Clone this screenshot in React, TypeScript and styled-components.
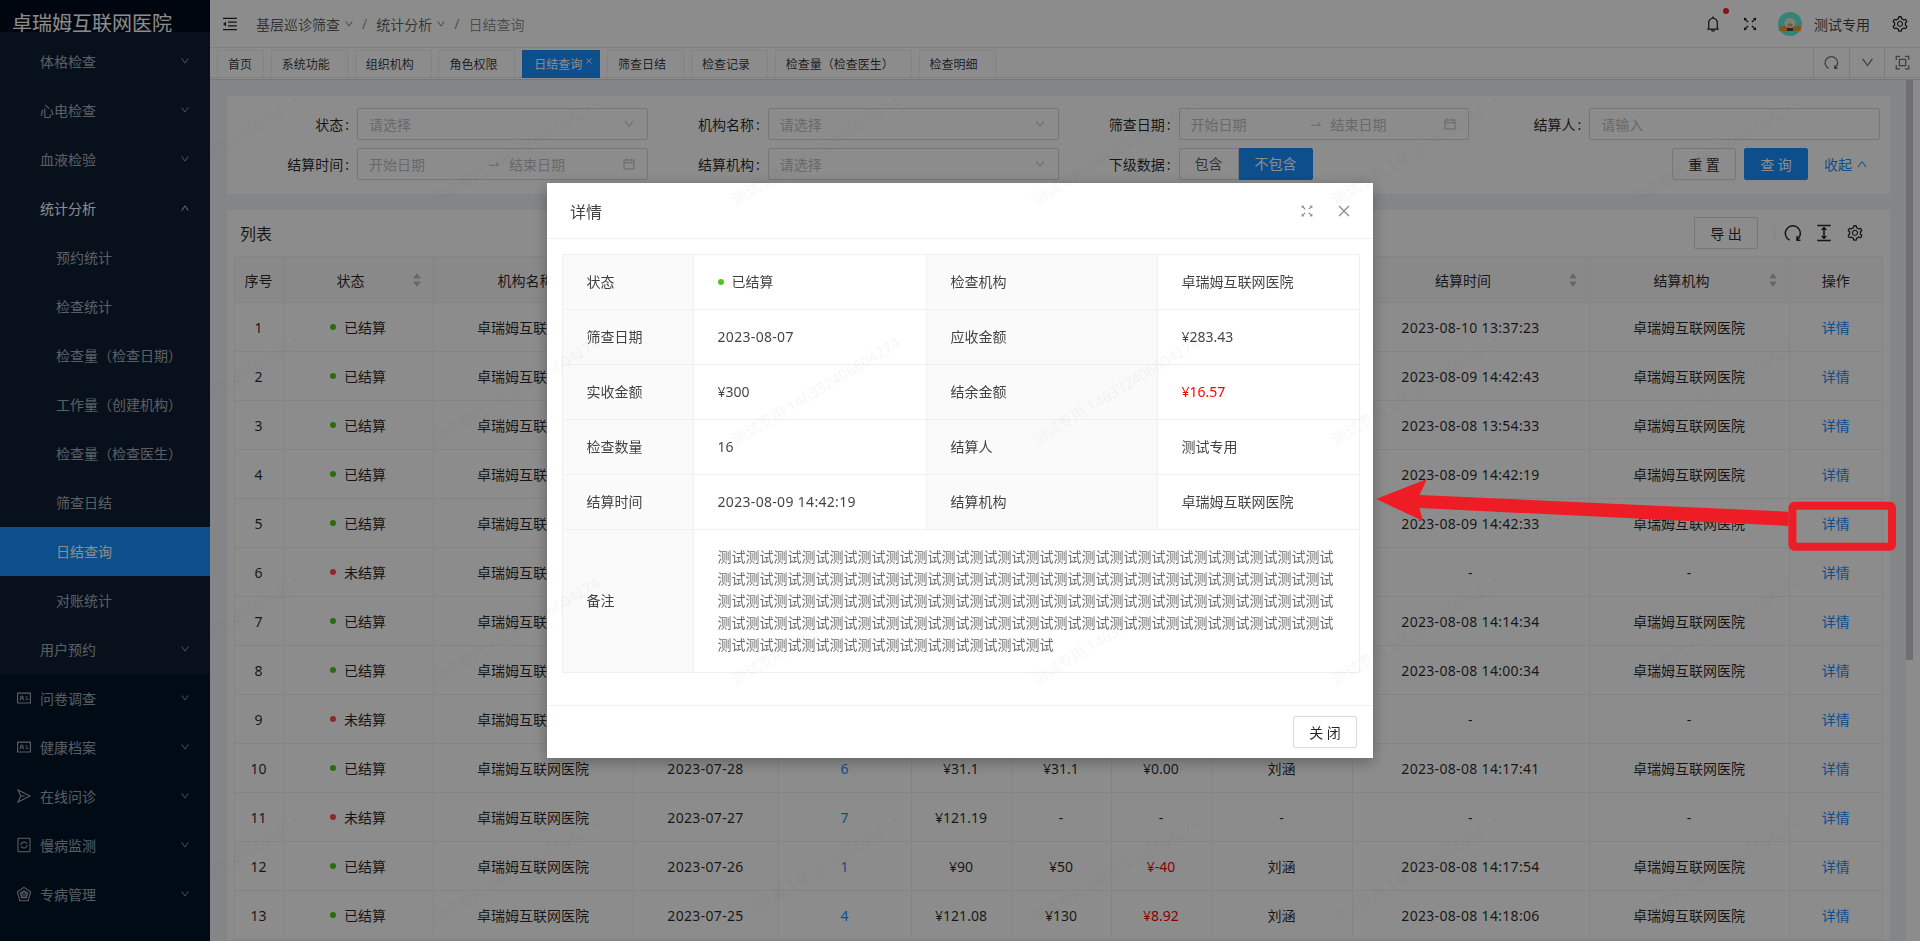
import React from 'react'
import styled, { createGlobalStyle } from 'styled-components'
import {
  AiOutlineBell,
  AiOutlineCalendar,
  AiOutlineClose,
  AiOutlineDown,
  AiOutlineFullscreen,
  AiOutlineIdcard,
  AiOutlineMenuFold,
  AiOutlineSetting,
  AiOutlineSwapRight,
  AiOutlineUp,
} from 'react-icons/ai'

const HOSPITAL = '卓瑞姆互联网医院'

type Row = {
  done: boolean
  date: string
  count: string
  due: string
  paid: string
  rest: string
  restRed?: boolean
  user: string
  time: string
  org: string
}

const rows: Row[] = [
  { done: true, date: '2023-08-09', count: '12', due: '¥210.5', paid: '¥210.5', rest: '¥0.00', user: '测试专用', time: '2023-08-10 13:37:23', org: HOSPITAL },
  { done: true, date: '2023-08-08', count: '9', due: '¥160.2', paid: '¥160.2', rest: '¥0.00', user: '测试专用', time: '2023-08-09 14:42:43', org: HOSPITAL },
  { done: true, date: '2023-08-07', count: '5', due: '¥90', paid: '¥90', rest: '¥0.00', user: '测试专用', time: '2023-08-08 13:54:33', org: HOSPITAL },
  { done: true, date: '2023-08-07', count: '16', due: '¥283.43', paid: '¥300', rest: '¥16.57', restRed: true, user: '测试专用', time: '2023-08-09 14:42:19', org: HOSPITAL },
  { done: true, date: '2023-08-06', count: '8', due: '¥142.1', paid: '¥142.1', rest: '¥0.00', user: '测试专用', time: '2023-08-09 14:42:33', org: HOSPITAL },
  { done: false, date: '2023-08-05', count: '3', due: '¥51.9', paid: '-', rest: '-', user: '-', time: '-', org: '-' },
  { done: true, date: '2023-08-04', count: '6', due: '¥104.6', paid: '¥104.6', rest: '¥0.00', user: '刘涵', time: '2023-08-08 14:14:34', org: HOSPITAL },
  { done: true, date: '2023-08-03', count: '2', due: '¥33.4', paid: '¥33.4', rest: '¥0.00', user: '刘涵', time: '2023-08-08 14:00:34', org: HOSPITAL },
  { done: false, date: '2023-07-31', count: '4', due: '¥70.2', paid: '-', rest: '-', user: '-', time: '-', org: '-' },
  { done: true, date: '2023-07-28', count: '6', due: '¥31.1', paid: '¥31.1', rest: '¥0.00', user: '刘涵', time: '2023-08-08 14:17:41', org: HOSPITAL },
  { done: false, date: '2023-07-27', count: '7', due: '¥121.19', paid: '-', rest: '-', user: '-', time: '-', org: '-' },
  { done: true, date: '2023-07-26', count: '1', due: '¥90', paid: '¥50', rest: '¥-40', restRed: true, user: '刘涵', time: '2023-08-08 14:17:54', org: HOSPITAL },
  { done: true, date: '2023-07-25', count: '4', due: '¥121.08', paid: '¥130', rest: '¥8.92', restRed: true, user: '刘涵', time: '2023-08-08 14:18:06', org: HOSPITAL },
]

const columns = [
  { title: '序号', width: 50 },
  { title: '状态', width: 150, sort: true },
  { title: '机构名称', width: 200, sort: true },
  { title: '筛查日期', width: 145, sort: true },
  { title: '检查数量', width: 133 },
  { title: '应收金额', width: 100 },
  { title: '实收金额', width: 100 },
  { title: '结余金额', width: 100 },
  { title: '结算人', width: 141 },
  { title: '结算时间', width: 237, sort: true },
  { title: '结算机构', width: 200, sort: true },
  { title: '操作', width: 93.5 },
]

const statsMenu = ['预约统计', '检查统计', '检查量（检查日期）', '工作量（创建机构）', '检查量（检查医生）', '筛查日结', '日结查询', '对账统计']
const tabs = ['首页', '系统功能', '组织机构', '角色权限', '日结查询', '筛查日结', '检查记录', '检查量（检查医生）', '检查明细']

const GlobalStyle = createGlobalStyle`
  * { box-sizing: border-box; }
  html, body { margin: 0; height: 100%; overflow: hidden; }
  body {
    font-family: "Noto Sans", "Noto Sans CJK SC", sans-serif;
    font-size: 14px;
    color: rgba(0, 0, 0, 0.85);
  }
`

const Page = styled.div`
  display: flex;
  height: 100vh;
  overflow: hidden;
  background: #f0f2f5;
`

const Sidebar = styled.aside`
  flex: 0 0 210px;
  background: #001529;
  color: rgba(255, 255, 255, 0.65);
  overflow: hidden;
`

const Logo = styled.div`
  height: 32px;
  padding: 11px 0 0 12px;
  font-size: 20px;
  line-height: 26px;
  color: #fff;
  background: #000c1c;
  overflow: hidden;
  white-space: nowrap;
`

const SubMenu = styled.div`
  padding-top: 5px;
  background: #0d1e32;
`

const MenuItem = styled.div<{ $indent?: number; $active?: boolean; $open?: boolean }>`
  display: flex;
  align-items: center;
  height: 49px;
  padding: 0 20px 2px ${p => p.$indent ?? 40}px;
  background: ${p => (p.$active ? '#1890ff' : 'transparent')};
  color: ${p => (p.$active || p.$open ? '#fff' : 'inherit')};
`

const MenuIcon = styled.span`
  display: flex;
  width: 16px;
  margin: 0 8px 0 -1px;
  font-size: 16px;
`

const MenuArrow = styled.span`
  display: flex;
  margin-left: auto;
  font-size: 10px;
`

const Main = styled.div`
  flex: 1;
  min-width: 0;
  display: flex;
  flex-direction: column;
`

const TopBar = styled.header`
  flex: 0 0 48px;
  display: flex;
  align-items: center;
  padding: 0 11px;
  background: #fff;
  border-bottom: 1px solid #e8e8e8;
`

const Trigger = styled.span`
  display: flex;
  font-size: 18px;
  margin-right: 17px;
  color: rgba(0, 0, 0, 0.85);
`

const Crumb = styled.span<{ $last?: boolean }>`
  display: flex;
  align-items: center;
  gap: 4px;
  color: ${p => (p.$last ? 'rgba(0,0,0,.45)' : 'rgba(0,0,0,.65)')};
`

const CrumbSlash = styled.span`
  margin: 0 9px 0 8px;
  color: rgba(0, 0, 0, 0.45);
`

const TopRight = styled.div`
  margin-left: auto;
  display: flex;
  align-items: center;
  gap: 19px;
  font-size: 18px;
  color: rgba(0, 0, 0, 0.85);
`

const TopIcon = styled.span`
  position: relative;
  display: flex;
`

const RedDot = styled.i`
  position: absolute;
  top: -7px;
  right: -7px;
  width: 6px;
  height: 6px;
  border-radius: 50%;
  background: #f5222d;
`

const User = styled.div`
  display: flex;
  align-items: center;
  gap: 12px;
  font-size: 14px;
  margin-right: 2px;
`

const UserName = styled.span`
  color: rgba(0, 0, 0, 0.75);
`

const TabStrip = styled.div`
  flex: 0 0 32px;
  background: #fff;
  border-bottom: 1px solid #d9d9d9;
`

const TabRow = styled.div`
  display: flex;
  height: 30px;
  padding: 2px 0 0 7px;
  border-bottom: 1px solid #e8e8e8;
`

const TabList = styled.div`
  flex: 1;
  display: flex;
  gap: 6.8px;
`

const Tab = styled.div<{ $active?: boolean; $closable?: boolean }>`
  display: flex;
  align-items: center;
  height: 28px;
  padding: 0 ${p => (p.$active ? 7 : p.$closable ? 18 : 12)}px 0 ${p => (p.$active ? 12 : 11)}px;
  font-size: 12px;
  white-space: nowrap;
  color: ${p => (p.$active ? '#fff' : 'rgba(0,0,0,.8)')};
  background: ${p => (p.$active ? '#1890ff' : '#fff')};
  outline: ${p => (p.$active ? 'none' : '1px solid #eee')};
  outline-offset: -1px;
`

const TabClose = styled.span`
  display: flex;
  margin: -6px 0 0 3px;
  font-size: 8px;
`

const TabTools = styled.div`
  display: flex;
  margin-top: -2px;
`

const TabTool = styled.span`
  display: flex;
  align-items: center;
  justify-content: center;
  width: 35.6px;
  font-size: 15px;
  color: rgba(0, 0, 0, 0.55);
  border-left: 1px solid #e0e0e0;
`

const ContentRow = styled.div`
  flex: 1;
  min-height: 0;
  display: flex;
`

const Scroller = styled.main`
  flex: 1;
  min-width: 0;
  padding: 16px 16px 0 17px;
  overflow: hidden;
`

const ScrollTrack = styled.div`
  flex: 0 0 14px;
  background: #fff;
`

const ScrollThumb = styled.div`
  width: 7px;
  height: 580px;
  background: #c9cbcf;
`

const Panel = styled.section`
  background: #fff;
`

const SearchPanel = styled(Panel)`
  display: grid;
  grid-template-columns: repeat(4, 1fr);
  row-gap: 8px;
  padding: 12px 10px 14px;
  margin-bottom: 16px;
`

const Field = styled.div`
  display: flex;
  align-items: center;
  height: 32px;
`

const FieldLabel = styled.label`
  flex: 0 0 120px;
  text-align: right;
  white-space: nowrap;

  &::after {
    content: ':';
    margin: 0 8px 0 2px;
  }
`

const InputBox = styled.div`
  flex: 1;
  min-width: 0;
  height: 32px;
  display: flex;
  align-items: center;
  padding: 0 11px;
  border: 1px solid #d9d9d9;
  border-radius: 2px;
  background: #fff;
  color: #bfbfbf;
`

const Placeholder = styled.span<{ $fixed?: number }>`
  flex: ${p => (p.$fixed ? `0 0 ${p.$fixed}px` : '1')};
`

const RangeArrow = styled.span`
  display: flex;
  font-size: 14px;
  margin-right: 8px;
`

const InputIcon = styled.span`
  display: flex;
  font-size: 14px;
`

const SelectArrow = styled.span`
  display: flex;
  margin-right: 1px;
  font-size: 12px;
`

const Radio = styled.span<{ $on?: boolean }>`
  height: 32px;
  padding: 0 15px;
  line-height: 30px;
  border: 1px solid ${p => (p.$on ? '#1890ff' : '#d9d9d9')};
  border-radius: ${p => (p.$on ? '0 2px 2px 0' : '2px 0 0 2px')};
  background: ${p => (p.$on ? '#1890ff' : '#fff')};
  color: ${p => (p.$on ? '#fff' : 'rgba(0,0,0,.65)')};
`

const Actions = styled(Field)`
  justify-content: flex-end;
  gap: 8px;
  padding-right: 12px;
`

const Button = styled.button<{ $primary?: boolean }>`
  width: 64px;
  height: 32px;
  padding: 0;
  font-family: inherit;
  font-size: 14px;
  border: 1px solid ${p => (p.$primary ? '#1890ff' : '#d9d9d9')};
  border-radius: 2px;
  background: ${p => (p.$primary ? '#1890ff' : '#fff')};
  color: ${p => (p.$primary ? '#fff' : 'rgba(0,0,0,.85)')};
  box-shadow: 0 2px 0 rgba(0, 0, 0, 0.015);
`

const Collapse = styled.span`
  display: flex;
  align-items: center;
  gap: 4px;
  margin-left: 8px;
  color: #1890ff;
  font-size: 14px;
`

const TablePanel = styled(Panel)`
  padding: 0 7px 0 6.5px;
`

const TableBar = styled.div`
  display: flex;
  align-items: center;
  height: 46px;
  padding: 0 19px 0 6.5px;
`

const TableTitle = styled.h3`
  margin: 0;
  font-size: 16px;
  font-weight: 400;
  color: rgba(0, 0, 0, 0.85);
`

const BarRight = styled.div`
  margin-left: auto;
  display: flex;
  align-items: center;
  gap: 13px;
  font-size: 18px;
`

const BarDivider = styled.i`
  width: 1px;
  height: 14px;
  margin: 0 -4px 0 3px;
  background: #eee;
`

const BarIcon = styled.span`
  display: flex;
`

const DataTable = styled.table`
  width: 1649.5px;
  table-layout: fixed;
  border-collapse: separate;
  border-spacing: 0;
  text-align: center;
`

const Col = styled.col<{ $w: number }>`
  width: ${p => p.$w}px;
`

const Th = styled.th`
  height: 47px;
  padding: 0 8px;
  font-weight: 400;
  background: #fafafa;
  border-top: 1px solid #f0f0f0;
  border-bottom: 1px solid #f0f0f0;
  border-right: 1px solid #f0f0f0;

  &:first-child {
    border-left: 1px solid #f0f0f0;
  }
`

const SortHead = styled.div`
  display: flex;
  align-items: center;
`

const SortTitle = styled.span`
  flex: 1;
`

const Sorter = styled.svg`
  flex: 0 0 14px;
  width: 14px;
  height: 16px;
  margin-right: 1px;
  fill: #bfbfbf;
`

const Td = styled.td<{ $tone?: 'link' | 'red' }>`
  height: 49px;
  padding: 0 8px;
  color: ${p => (p.$tone === 'link' ? '#1890ff' : p.$tone === 'red' ? '#ff0000' : 'inherit')};
  border-bottom: 1px solid #f0f0f0;
  border-right: 1px solid #f0f0f0;

  &:first-child {
    border-left: 1px solid #f0f0f0;
  }
`

const Stamp = styled.span`
  letter-spacing: 0.32px;
`

const Badge = styled.span`
  display: inline-flex;
  align-items: center;
  gap: 8px;
  vertical-align: top;
`

const Dot = styled.i<{ $ok: boolean }>`
  width: 6px;
  height: 6px;
  border-radius: 50%;
  background: ${p => (p.$ok ? '#52c41a' : '#ff4d4f')};
`

const Mask = styled.div`
  position: fixed;
  inset: 0;
  background: rgba(0, 0, 0, 0.45);
`

const ModalWrap = styled.div`
  position: fixed;
  inset: 0;
  display: flex;
  justify-content: center;
  align-items: flex-start;
  padding-top: 183px;
`

const Modal = styled.div`
  width: 826px;
  background: #fff;
  box-shadow: 0 4px 14px rgba(0, 0, 0, 0.3);
`

const ModalHead = styled.div`
  display: flex;
  align-items: center;
  height: 56px;
  padding: 0 21px 0 23px;
  border-bottom: 1px solid #f0f0f0;
`

const ModalTitle = styled.span`
  font-size: 16px;
  color: rgba(0, 0, 0, 0.75);
`

const ModalTools = styled.div`
  margin-left: auto;
  display: flex;
  align-items: center;
  gap: 21px;
  color: rgba(0, 0, 0, 0.45);
  font-size: 16px;
`

const ModalBody = styled.div`
  padding: 15px 14.5px 32px;
`

const DescTable = styled.table`
  width: 797px;
  table-layout: fixed;
  border-collapse: collapse;
`

const DescLabel = styled.th`
  padding: 16px 24px;
  font-weight: 400;
  text-align: left;
  line-height: 22px;
  color: rgba(0, 0, 0, 0.75);
  background: #fafafa;
  border: 1px solid #f0f0f0;
`

const DescValue = styled.td<{ $red?: boolean }>`
  padding: 16px 24px;
  line-height: 22px;
  color: ${p => (p.$red ? '#ff0000' : 'rgba(0,0,0,.75)')};
  border: 1px solid #f0f0f0;
`

const RemarkText = styled(DescValue)`
  color: rgba(0, 0, 0, 0.6);
`

const ModalFoot = styled.div`
  display: flex;
  justify-content: flex-end;
  padding: 10px 16px;
  border-top: 1px solid #f0f0f0;
`

const WatermarkLayer = styled.div`
  position: fixed;
  top: 0;
  right: 0;
  bottom: 0;
  left: 210px;
  overflow: hidden;
  pointer-events: none;
`

const WatermarkGrid = styled.div`
  position: absolute;
  left: -377px;
  top: -30px;
  display: grid;
  grid-template-columns: repeat(7, 300px);
  grid-auto-rows: 240px;
`

const Watermark = styled.span`
  align-self: end;
  font-size: 15px;
  line-height: 20px;
  white-space: nowrap;
  color: rgba(0, 0, 0, 0.04);
  transform: rotate(-31deg);
  transform-origin: left center;
`

const Annotation = styled.svg`
  position: fixed;
  left: 1370px;
  top: 470px;
  width: 530px;
  height: 90px;
  pointer-events: none;
`

// 顶部和表格工具栏共用的刷新图标
const ReloadIcon = () => (
  <svg viewBox="0 0 24 24" width="1em" height="1em" fill="none" stroke="currentColor" strokeWidth="2">
    <path d="M7.5 21.5A10 10 0 1 1 17 21" />
    <path d="M17.5 16v5.5H22" />
  </svg>
)

const FrameIcon = () => (
  <svg viewBox="0 0 24 24" width="1em" height="1em" fill="none" stroke="currentColor" strokeWidth="2">
    <path d="M2 8V2h6M16 2h6v6M22 16v6h-6M8 22H2v-6" />
    <rect x="7" y="7" width="10" height="10" />
  </svg>
)

const RowHeightIcon = () => (
  <svg viewBox="0 0 24 24" width="1em" height="1em" fill="none" stroke="currentColor" strokeWidth="2">
    <path d="M3 2h18M3 22h18M12 5v14" />
    <path d="M9 8l3-3 3 3M9 16l3 3 3-3" />
  </svg>
)

const SendIcon = () => (
  <svg viewBox="0 0 24 24" width="1em" height="1em" fill="none" stroke="currentColor" strokeWidth="1.6">
    <path d="M3 3l18 9-18 9 4-9z" />
    <path d="M7 12h6" />
  </svg>
)

const MonitorIcon = () => (
  <svg viewBox="0 0 24 24" width="1em" height="1em" fill="none" stroke="currentColor" strokeWidth="1.6">
    <rect x="3" y="2" width="18" height="20" rx="1" />
    <path d="M7.500 12a4.500 4.500 0 0 1 7.700-3.200l1.300 1.300M16.500 12a4.500 4.500 0 0 1-7.700 3.200l-1.300-1.300" />
  </svg>
)

const PentagonIcon = () => (
  <svg viewBox="0 0 24 24" width="1em" height="1em" fill="none" stroke="currentColor" strokeWidth="1.6">
    <path d="M12 2l10 7-3.800 13H5.800L2 9z" />
    <path d="M12 7.500l5.500 3.500-2 6.500h-7l-2-6.500z" fill="currentColor" fillOpacity=".5" />
  </svg>
)

const Avatar = () => (
  <svg viewBox="0 0 24 24" width="24" height="24">
    <circle cx="12" cy="12" r="12" fill="#5af0d8" />
    <rect x="1" y="14" width="22" height="5" fill="#e0a83a" />
    <ellipse cx="12" cy="11" rx="5.500" ry="5" fill="#f4e2d8" />
    <ellipse cx="12" cy="13" rx="2.600" ry="1.800" fill="#d99a8c" />
    <rect x="9" y="16" width="6" height="3" fill="#5a4636" />
  </svg>
)

const SortMark = () => (
  <Sorter viewBox="0 0 14 16">
    <path d="M7 1l4 5.500H3zM7 15l4-5.500H3z" />
  </Sorter>
)

const Status = ({ ok }: { ok: boolean }) => (
  <Badge>
    <Dot $ok={ok} />
    {ok ? '已结算' : '未结算'}
  </Badge>
)

const Select = () => (
  <InputBox>
    <Placeholder>请选择</Placeholder>
    <SelectArrow>
      <AiOutlineDown />
    </SelectArrow>
  </InputBox>
)

const DateRange = () => (
  <InputBox>
    <Placeholder $fixed={118}>开始日期</Placeholder>
    <RangeArrow>
      <AiOutlineSwapRight />
    </RangeArrow>
    <Placeholder>结束日期</Placeholder>
    <InputIcon>
      <AiOutlineCalendar />
    </InputIcon>
  </InputBox>
)

const Menu = ({ label, icon, open }: { label: string; icon?: React.ReactNode; open?: boolean }) => (
  <MenuItem $indent={icon ? 17 : 40} $open={open}>
    {icon && <MenuIcon>{icon}</MenuIcon>}
    {label}
    <MenuArrow>{open ? <AiOutlineUp /> : <AiOutlineDown />}</MenuArrow>
  </MenuItem>
)

const App = () => {
  return (
    <Page>
      <GlobalStyle />
      <Sidebar>
        <Logo>{HOSPITAL}</Logo>
        <SubMenu>
          <Menu label="体格检查" />
          <Menu label="心电检查" />
          <Menu label="血液检验" />
          <Menu label="统计分析" open />
          {statsMenu.map(name => (
            <MenuItem key={name} $indent={56} $active={name === '日结查询'}>
              {name}
            </MenuItem>
          ))}
          <Menu label="用户预约" />
        </SubMenu>
        <Menu label="问卷调查" icon={<AiOutlineIdcard />} />
        <Menu label="健康档案" icon={<AiOutlineIdcard />} />
        <Menu label="在线问诊" icon={<SendIcon />} />
        <Menu label="慢病监测" icon={<MonitorIcon />} />
        <Menu label="专病管理" icon={<PentagonIcon />} />
      </Sidebar>

      <Main>
        <TopBar>
          <Trigger>
            <AiOutlineMenuFold />
          </Trigger>
          <Crumb>
            基层巡诊筛查 <AiOutlineDown size={10} />
          </Crumb>
          <CrumbSlash>/</CrumbSlash>
          <Crumb>
            统计分析 <AiOutlineDown size={10} />
          </Crumb>
          <CrumbSlash>/</CrumbSlash>
          <Crumb $last>日结查询</Crumb>
          <TopRight>
            <TopIcon>
              <AiOutlineBell />
              <RedDot />
            </TopIcon>
            <TopIcon>
              <AiOutlineFullscreen />
            </TopIcon>
            <User>
              <Avatar />
              <UserName>测试专用</UserName>
            </User>
            <TopIcon>
              <AiOutlineSetting />
            </TopIcon>
          </TopRight>
        </TopBar>

        <TabStrip>
          <TabRow>
            <TabList>
              {tabs.map(name => (
                <Tab key={name} $active={name === '日结查询'} $closable={name !== '首页'}>
                  {name}
                  {name === '日结查询' && (
                    <TabClose>
                      <AiOutlineClose />
                    </TabClose>
                  )}
                </Tab>
              ))}
            </TabList>
            <TabTools>
              <TabTool>
                <ReloadIcon />
              </TabTool>
              <TabTool>
                <AiOutlineDown />
              </TabTool>
              <TabTool>
                <FrameIcon />
              </TabTool>
            </TabTools>
          </TabRow>
        </TabStrip>

        <ContentRow>
          <Scroller>
            <SearchPanel>
              <Field>
                <FieldLabel>状态</FieldLabel>
                <Select />
              </Field>
              <Field>
                <FieldLabel>机构名称</FieldLabel>
                <Select />
              </Field>
              <Field>
                <FieldLabel>筛查日期</FieldLabel>
                <DateRange />
              </Field>
              <Field>
                <FieldLabel>结算人</FieldLabel>
                <InputBox>请输入</InputBox>
              </Field>
              <Field>
                <FieldLabel>结算时间</FieldLabel>
                <DateRange />
              </Field>
              <Field>
                <FieldLabel>结算机构</FieldLabel>
                <Select />
              </Field>
              <Field>
                <FieldLabel>下级数据</FieldLabel>
                <Radio>包含</Radio>
                <Radio $on>不包含</Radio>
              </Field>
              <Actions>
                <Button>重 置</Button>
                <Button $primary>查 询</Button>
                <Collapse>
                  收起 <AiOutlineUp size={12} />
                </Collapse>
              </Actions>
            </SearchPanel>

            <TablePanel>
              <TableBar>
                <TableTitle>列表</TableTitle>
                <BarRight>
                  <Button>导 出</Button>
                  <BarDivider />
                  <BarIcon>
                    <ReloadIcon />
                  </BarIcon>
                  <BarIcon>
                    <RowHeightIcon />
                  </BarIcon>
                  <BarIcon>
                    <AiOutlineSetting />
                  </BarIcon>
                </BarRight>
              </TableBar>
              <DataTable>
                <colgroup>
                  {columns.map(c => (
                    <Col key={c.title} $w={c.width} />
                  ))}
                </colgroup>
                <thead>
                  <tr>
                    {columns.map(c => (
                      <Th key={c.title}>
                        {c.sort ? (
                          <SortHead>
                            <SortTitle>{c.title}</SortTitle>
                            <SortMark />
                          </SortHead>
                        ) : (
                          c.title
                        )}
                      </Th>
                    ))}
                  </tr>
                </thead>
                <tbody>
                  {rows.map((r, i) => (
                    <tr key={i}>
                      <Td>{i + 1}</Td>
                      <Td>
                        <Status ok={r.done} />
                      </Td>
                      <Td>{HOSPITAL}</Td>
                      <Td>
                        <Stamp>{r.date}</Stamp>
                      </Td>
                      <Td $tone="link">{r.count}</Td>
                      <Td>{r.due}</Td>
                      <Td>{r.paid}</Td>
                      <Td $tone={r.restRed ? 'red' : undefined}>{r.rest}</Td>
                      <Td>{r.user}</Td>
                      <Td>
                        <Stamp>{r.time}</Stamp>
                      </Td>
                      <Td>{r.org}</Td>
                      <Td $tone="link">详情</Td>
                    </tr>
                  ))}
                </tbody>
              </DataTable>
            </TablePanel>
          </Scroller>
          <ScrollTrack>
            <ScrollThumb />
          </ScrollTrack>
        </ContentRow>
      </Main>

      <Mask />

      <ModalWrap>
        <Modal>
          <ModalHead>
            <ModalTitle>详情</ModalTitle>
            <ModalTools>
              <AiOutlineFullscreen />
              <AiOutlineClose />
            </ModalTools>
          </ModalHead>
          <ModalBody>
            <DescTable>
              <colgroup>
                <Col $w={131} />
                <Col $w={233} />
                <Col $w={231} />
                <Col $w={202} />
              </colgroup>
              <tbody>
                <tr>
                  <DescLabel>状态</DescLabel>
                  <DescValue>
                    <Status ok />
                  </DescValue>
                  <DescLabel>检查机构</DescLabel>
                  <DescValue>{HOSPITAL}</DescValue>
                </tr>
                <tr>
                  <DescLabel>筛查日期</DescLabel>
                  <DescValue>
                    <Stamp>2023-08-07</Stamp>
                  </DescValue>
                  <DescLabel>应收金额</DescLabel>
                  <DescValue>¥283.43</DescValue>
                </tr>
                <tr>
                  <DescLabel>实收金额</DescLabel>
                  <DescValue>¥300</DescValue>
                  <DescLabel>结余金额</DescLabel>
                  <DescValue $red>¥16.57</DescValue>
                </tr>
                <tr>
                  <DescLabel>检查数量</DescLabel>
                  <DescValue>16</DescValue>
                  <DescLabel>结算人</DescLabel>
                  <DescValue>测试专用</DescValue>
                </tr>
                <tr>
                  <DescLabel>结算时间</DescLabel>
                  <DescValue>
                    <Stamp>2023-08-09 14:42:19</Stamp>
                  </DescValue>
                  <DescLabel>结算机构</DescLabel>
                  <DescValue>{HOSPITAL}</DescValue>
                </tr>
                <tr>
                  <DescLabel>备注</DescLabel>
                  <RemarkText colSpan={3}>{'测试'.repeat(100)}</RemarkText>
                </tr>
              </tbody>
            </DescTable>
          </ModalBody>
          <ModalFoot>
            <Button>关 闭</Button>
          </ModalFoot>
        </Modal>
      </ModalWrap>

      <WatermarkLayer>
        <WatermarkGrid>
          {Array.from({ length: 28 }, (_, i) => (
            <Watermark key={i}>测试专用 146332406604274</Watermark>
          ))}
        </WatermarkGrid>
      </WatermarkLayer>

      {/* 截图上的红色标注 */}
      <Annotation viewBox="1370 470 530 90">
        <path
          d="M1376 499L1427 479L1419.500 495L1788.400 511.700V526L1419.500 508L1423 521Z"
          fill="#ee1c25"
        />
        <rect x="1792.400" y="505.700" width="99.600" height="41" rx="2" fill="none" stroke="#ee1c25" strokeWidth="8" />
      </Annotation>
    </Page>
  )
}

export default App
